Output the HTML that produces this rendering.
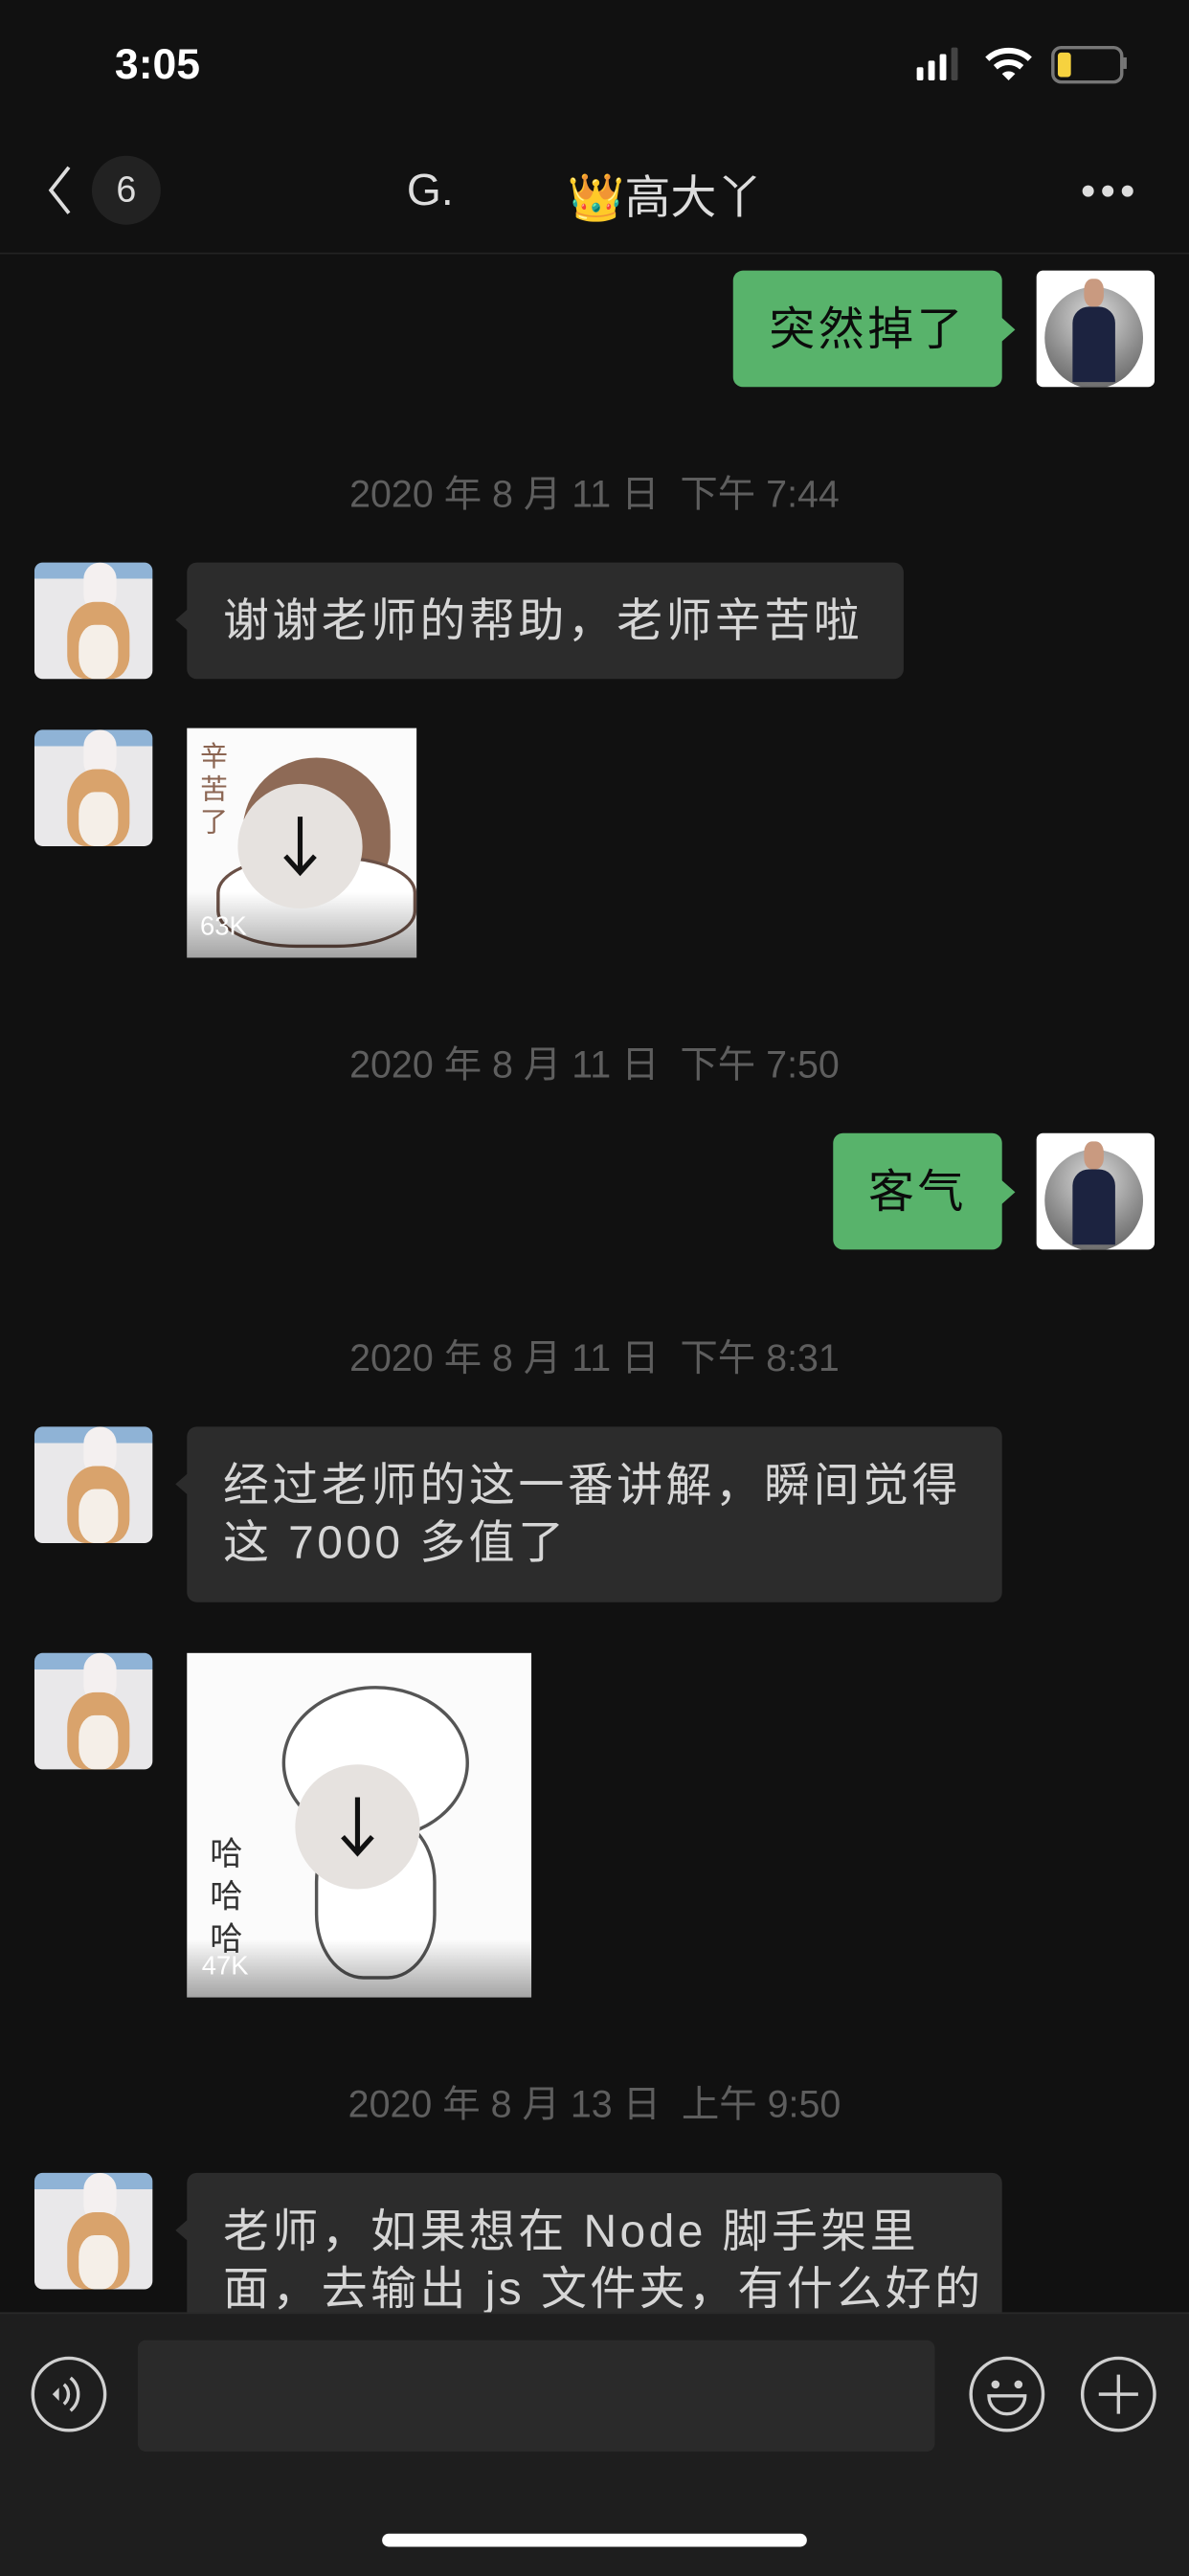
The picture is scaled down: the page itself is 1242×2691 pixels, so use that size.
<!DOCTYPE html>
<html><head><meta charset="utf-8"><style>
html,body{margin:0;padding:0;background:#111;width:1242px;height:2688px;overflow:hidden}
#w{position:absolute;left:0;top:0;width:725px;height:1570px;transform:scale(1.7131);transform-origin:0 0;background:#111;font-family:"Liberation Sans","Noto Sans CJK SC",sans-serif}
.a{position:absolute}
.ts{position:absolute;left:0;width:725px;text-align:center;color:#5e5e5e;font-size:23px;white-space:pre}
.g{position:absolute;background:#58b36b;border-radius:6px;color:#0b0b0b;font-size:28px;letter-spacing:2px}
.g:after{content:"";position:absolute;right:-8px;top:28px;border-left:9px solid #58b36b;border-top:8px solid transparent;border-bottom:8px solid transparent}
.b{position:absolute;background:#2c2c2c;border-radius:6px;color:#d6d6d6;font-size:28px;letter-spacing:2px;line-height:35px;padding:18px 22px;box-sizing:border-box;white-space:nowrap}
.b:before{content:"";position:absolute;left:-7px;top:28px;border-right:8px solid #2c2c2c;border-top:7px solid transparent;border-bottom:7px solid transparent}
.dog{position:absolute;width:72px;height:71px;border-radius:5px;overflow:hidden;background:linear-gradient(#8fb3d6 0,#8fb3d6 14%,#e9e8ea 14%)}
.dog i{position:absolute;display:block}
.me{position:absolute;width:72px;height:71px;border-radius:4px;background:#fff;overflow:hidden}
.img{position:absolute;background:#fbfbfb;overflow:hidden}
.dl{position:absolute;width:76px;height:76px;border-radius:50%;background:#e6e2df}
.k{position:absolute;color:#fff;font-size:16px}
</style></head><body><div id="w">
<div class="a" style="left:70px;top:24px;color:#fff;font-size:26px;font-weight:bold">3:05</div>
<div class="a" style="left:559px;top:41px;width:4px;height:8px;background:#fff;border-radius:1px"></div>
<div class="a" style="left:566px;top:37px;width:4px;height:12px;background:#fff;border-radius:1px"></div>
<div class="a" style="left:573px;top:33px;width:4px;height:16px;background:#fff;border-radius:1px"></div>
<div class="a" style="left:580px;top:29px;width:4px;height:20px;background:#444;border-radius:1px"></div>
<svg class="a" style="left:600px;top:28px" width="30" height="22" viewBox="0 0 30 22"><path d="M2 8a19 19 0 0 1 26 0" stroke="#fff" stroke-width="3.5" fill="none"/><path d="M7 13a12 12 0 0 1 16 0" stroke="#fff" stroke-width="3.5" fill="none"/><path d="M11 17l4 4 4-4a6 6 0 0 0-8 0z" fill="#fff"/></svg>
<div class="a" style="left:641px;top:28px;width:40px;height:19px;border:2px solid #777;border-radius:6px"></div>
<div class="a" style="left:645px;top:32px;width:8px;height:15px;background:#f6d23f;border-radius:2px"></div>
<div class="a" style="left:685px;top:35px;width:2px;height:7px;background:#777"></div>
<svg class="a" style="left:26px;top:100px" width="20" height="32"><path d="M16 2L5 16l11 14" stroke="#ddd" stroke-width="2.2" fill="none"/></svg>
<div class="a" style="left:56px;top:95px;width:42px;height:42px;border-radius:50%;background:#222;color:#ddd;font-size:22px;text-align:center;line-height:42px">6</div>
<div class="a" style="left:248px;top:101px;color:#ddd;font-size:27px">G.</div>
<div class="a" style="left:346px;top:99px;color:#ddd;font-size:28px">👑高大丫</div>
<div class="a" style="left:660px;top:113px;width:7px;height:7px;border-radius:50%;background:#ddd;box-shadow:12px 0 #ddd,24px 0 #ddd"></div>
<div class="a" style="left:0;top:154px;width:725px;height:1px;background:#232323"></div>
<div class="g" style="left:447px;top:165px;width:164px;height:71px;line-height:71px;text-align:center">突然掉了</div>
<div class="me" style="left:632px;top:165px"><div class="a" style="left:5px;top:10px;width:60px;height:62px;border-radius:50%;background:radial-gradient(circle at 50% 30%,#ddd,#888 60%,#555)"></div><div class="a" style="left:22px;top:22px;width:26px;height:46px;background:#1c2340;border-radius:10px 10px 0 0"></div><div class="a" style="left:29px;top:5px;width:12px;height:17px;border-radius:40%;background:#c99a80"></div></div>
<div class="ts" style="top:282px">2020 年 8 月 11 日  下午 7:44</div>
<div class="dog" style="left:21px;top:343px"><i style="left:30px;top:0;width:20px;height:30px;background:#f4f0f0;border-radius:10px"></i><i style="left:20px;top:24px;width:38px;height:47px;background:#d9a36c;border-radius:45% 45% 30% 30%"></i><i style="left:27px;top:38px;width:24px;height:33px;background:#f5efe8;border-radius:40%"></i></div>
<div class="b" style="left:114px;top:343px;width:437px;height:71px">谢谢老师的帮助，老师辛苦啦</div>
<div class="dog" style="left:21px;top:445px"><i style="left:30px;top:0;width:20px;height:30px;background:#f4f0f0;border-radius:10px"></i><i style="left:20px;top:24px;width:38px;height:47px;background:#d9a36c;border-radius:45% 45% 30% 30%"></i><i style="left:27px;top:38px;width:24px;height:33px;background:#f5efe8;border-radius:40%"></i></div>
<div class="img" style="left:114px;top:444px;width:140px;height:140px">
<div class="a" style="left:8px;top:8px;color:#8b6552;font-size:17px;line-height:20px;width:18px">辛苦了</div>
<div class="a" style="left:34px;top:18px;width:90px;height:90px;border-radius:50% 50% 40% 40%;background:#8e6a56"></div>
<div class="a" style="left:18px;top:78px;width:118px;height:52px;border-radius:40%;background:#fff;border:2px solid #6a5046"></div>
<div class="a" style="left:0;top:100px;width:140px;height:40px;background:linear-gradient(rgba(0,0,0,0),rgba(0,0,0,.35))"></div>
<div class="dl" style="left:31px;top:34px"></div>
<svg class="a" style="left:57px;top:52px" width="24" height="40"><path d="M12 2v34M3 26l9 10 9-10" stroke="#111" stroke-width="3" fill="none"/></svg>
<div class="k" style="left:8px;top:113px">63K</div></div>
<div class="ts" style="top:630px">2020 年 8 月 11 日  下午 7:50</div>
<div class="g" style="left:508px;top:691px;width:103px;height:71px;line-height:71px;text-align:center">客气</div>
<div class="me" style="left:632px;top:691px"><div class="a" style="left:5px;top:10px;width:60px;height:62px;border-radius:50%;background:radial-gradient(circle at 50% 30%,#ddd,#888 60%,#555)"></div><div class="a" style="left:22px;top:22px;width:26px;height:46px;background:#1c2340;border-radius:10px 10px 0 0"></div><div class="a" style="left:29px;top:5px;width:12px;height:17px;border-radius:40%;background:#c99a80"></div></div>
<div class="ts" style="top:809px">2020 年 8 月 11 日  下午 8:31</div>
<div class="dog" style="left:21px;top:870px"><i style="left:30px;top:0;width:20px;height:30px;background:#f4f0f0;border-radius:10px"></i><i style="left:20px;top:24px;width:38px;height:47px;background:#d9a36c;border-radius:45% 45% 30% 30%"></i><i style="left:27px;top:38px;width:24px;height:33px;background:#f5efe8;border-radius:40%"></i></div>
<div class="b" style="left:114px;top:870px;width:497px;height:107px">经过老师的这一番讲解，瞬间觉得<br>这 7000 多值了</div>
<div class="dog" style="left:21px;top:1008px"><i style="left:30px;top:0;width:20px;height:30px;background:#f4f0f0;border-radius:10px"></i><i style="left:20px;top:24px;width:38px;height:47px;background:#d9a36c;border-radius:45% 45% 30% 30%"></i><i style="left:27px;top:38px;width:24px;height:33px;background:#f5efe8;border-radius:40%"></i></div>
<div class="img" style="left:114px;top:1008px;width:210px;height:210px">
<div class="a" style="left:58px;top:20px;width:110px;height:90px;border-radius:50%;background:#fff;border:2px solid #555"></div>
<div class="a" style="left:78px;top:100px;width:70px;height:95px;border-radius:40%;background:#fff;border:2px solid #555"></div>
<div class="a" style="left:14px;top:110px;color:#333;font-size:20px;line-height:26px;width:22px">哈哈哈</div>
<div class="a" style="left:0;top:175px;width:210px;height:35px;background:linear-gradient(rgba(0,0,0,0),rgba(0,0,0,.35))"></div>
<div class="dl" style="left:66px;top:68px"></div>
<svg class="a" style="left:92px;top:86px" width="24" height="40"><path d="M12 2v34M3 26l9 10 9-10" stroke="#111" stroke-width="3" fill="none"/></svg>
<div class="k" style="left:9px;top:183px">47K</div></div>
<div class="ts" style="top:1264px">2020 年 8 月 13 日  上午 9:50</div>
<div class="dog" style="left:21px;top:1325px"><i style="left:30px;top:0;width:20px;height:30px;background:#f4f0f0;border-radius:10px"></i><i style="left:20px;top:24px;width:38px;height:47px;background:#d9a36c;border-radius:45% 45% 30% 30%"></i><i style="left:27px;top:38px;width:24px;height:33px;background:#f5efe8;border-radius:40%"></i></div>
<div class="b" style="left:114px;top:1325px;width:497px;height:120px">老师，如果想在 Node 脚手架里<br>面，去输出 js 文件夹，有什么好的</div>
<div class="a" style="left:0;top:1410px;width:725px;height:160px;background:#1e1e1e;border-top:1px solid #2a2a2a"></div>
<div class="a" style="left:84px;top:1427px;width:486px;height:68px;background:#2a2a2a;border-radius:5px"></div>
<svg class="a" style="left:17px;top:1435px" width="50" height="50"><circle cx="25" cy="25" r="22" stroke="#d0d0d0" stroke-width="2" fill="none"/><path d="M15 25l4-4v8z" fill="#d0d0d0"/><path d="M22 19a8 8 0 0 1 0 12M26 15a13 13 0 0 1 0 20" stroke="#d0d0d0" stroke-width="2" fill="none"/></svg>
<svg class="a" style="left:589px;top:1435px" width="50" height="50"><circle cx="25" cy="25" r="22" stroke="#d0d0d0" stroke-width="2" fill="none"/><circle cx="18" cy="19" r="2.5" fill="#d0d0d0"/><circle cx="32" cy="19" r="2.5" fill="#d0d0d0"/><path d="M14 26h22a11 11 0 0 1-22 0z" stroke="#d0d0d0" stroke-width="2" fill="none"/></svg>
<svg class="a" style="left:657px;top:1435px" width="50" height="50"><circle cx="25" cy="25" r="22" stroke="#d0d0d0" stroke-width="2" fill="none"/><path d="M25 13v24M13 25h24" stroke="#d0d0d0" stroke-width="2"/></svg>
<div class="a" style="left:233px;top:1545px;width:259px;height:8px;border-radius:4px;background:#fff"></div>
</div></body></html>
